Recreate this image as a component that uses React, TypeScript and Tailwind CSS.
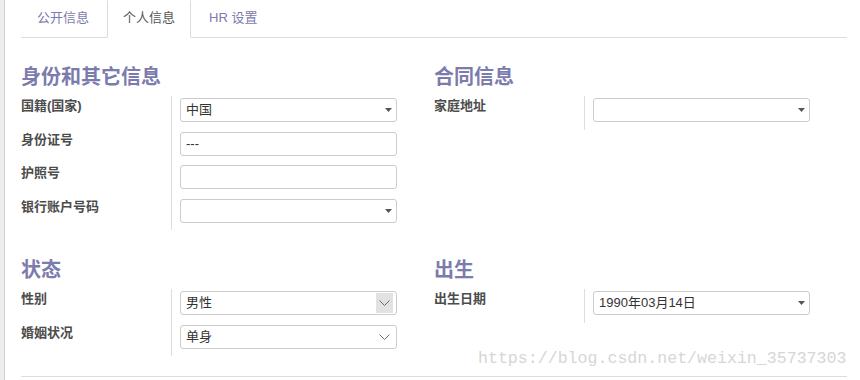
const FONT = 'font-["Liberation_Sans","Noto_Sans_CJK_SC",sans-serif]';

function Caret() {
  return (
    <svg width="7" height="4" viewBox="0 0 7 4" className="ml-auto shrink-0">
      <path d="M0 0h7L3.5 4z" fill="#555" />
    </svg>
  );
}

function Chevron({ hover }: { hover?: boolean }) {
  return (
    <div
      className={`ml-auto flex h-[20px] w-[17px] shrink-0 items-center justify-center ${
        hover ? "bg-[#e2e2e2]" : ""
      }`}
    >
      <svg width="11" height="6" viewBox="0 0 11 6">
        <path d="M0.5 0.5L5.5 5.5L10.5 0.5" fill="none" stroke="#6b6b6b" strokeWidth="1" />
      </svg>
    </div>
  );
}

type Field = {
  label: string;
  value?: string;
  kind: "caret" | "text" | "chevron" | "chevron-hover";
};

function Group({ title, fields }: { title: string; fields: Field[] }) {
  return (
    <div>
      <h2 className="text-[20px] font-bold leading-[24px] text-[#7c7bad]">{title}</h2>
      <div className="mt-[7px]">
        {fields.map((f) => (
          <div key={f.label} className="flex">
            <div className="w-[150px] pt-[2px] text-[13px] font-bold leading-[16px] text-[#4c4c4c]">
              {f.label}
            </div>
            <div className="h-[33.5px] border-l border-[#dedede] pl-[8px] pt-[2px]">
              <div
                className={`flex h-[24px] w-[217px] items-center rounded-[3px] border border-[#cccccc] bg-white pl-[5px] text-[13px] text-[#333] ${
                  f.kind.startsWith("chevron") ? "pr-[3px]" : "pr-[4px]"
                }`}
              >
                <span>{f.value}</span>
                {f.kind === "caret" && <Caret />}
                {f.kind === "chevron" && <Chevron />}
                {f.kind === "chevron-hover" && <Chevron hover />}
              </div>
            </div>
          </div>
        ))}
      </div>
    </div>
  );
}

const TABS = [
  { name: "公开信息", active: false },
  { name: "个人信息", active: true },
  { name: "HR 设置", active: false },
];

export default function App() {
  return (
    <div className={`relative flex h-[380px] w-[860px] overflow-hidden bg-white ${FONT}`}>
      <div className="w-[5px] shrink-0 border-r border-[#cfcfd9] bg-[#ededed]" />
      <div className="ml-[16px] mr-[13px] flex-1">
        <div className="flex h-[38px] border-b border-[#dddddd]">
          {TABS.map((t) => (
            <div
              key={t.name}
              className={`-mb-px mr-[2px] h-[38px] border px-[15px] pt-[8px] text-[13px] leading-[18px] ${
                t.active
                  ? "border-[#dddddd] border-t-transparent border-b-white bg-white text-[#555]"
                  : "border-transparent text-[#7c7bad]"
              }`}
            >
              {t.name}
            </div>
          ))}
        </div>

        <div className="mt-[27px] grid grid-cols-[413px_1fr]">
          <Group
            title="身份和其它信息"
            fields={[
              { label: "国籍(国家)", value: "中国", kind: "caret" },
              { label: "身份证号", value: "---", kind: "text" },
              { label: "护照号", kind: "text" },
              { label: "银行账户号码", kind: "caret" },
            ]}
          />
          <Group title="合同信息" fields={[{ label: "家庭地址", kind: "caret" }]} />
        </div>

        <div className="mt-[28px] grid grid-cols-[413px_1fr]">
          <Group
            title="状态"
            fields={[
              { label: "性别", value: "男性", kind: "chevron-hover" },
              { label: "婚姻状况", value: "单身", kind: "chevron" },
            ]}
          />
          <Group
            title="出生"
            fields={[{ label: "出生日期", value: "1990年03月14日", kind: "caret" }]}
          />
        </div>

        <div className="mt-[20px] h-px bg-[#dddddd]" />
      </div>

      <div className='absolute left-[478px] top-[349px] font-["Liberation_Mono",monospace] text-[16.6px] leading-[20px] text-[#d6d6d6]'>
        https://blog.csdn.net/weixin_35737303
      </div>
    </div>
  );
}
